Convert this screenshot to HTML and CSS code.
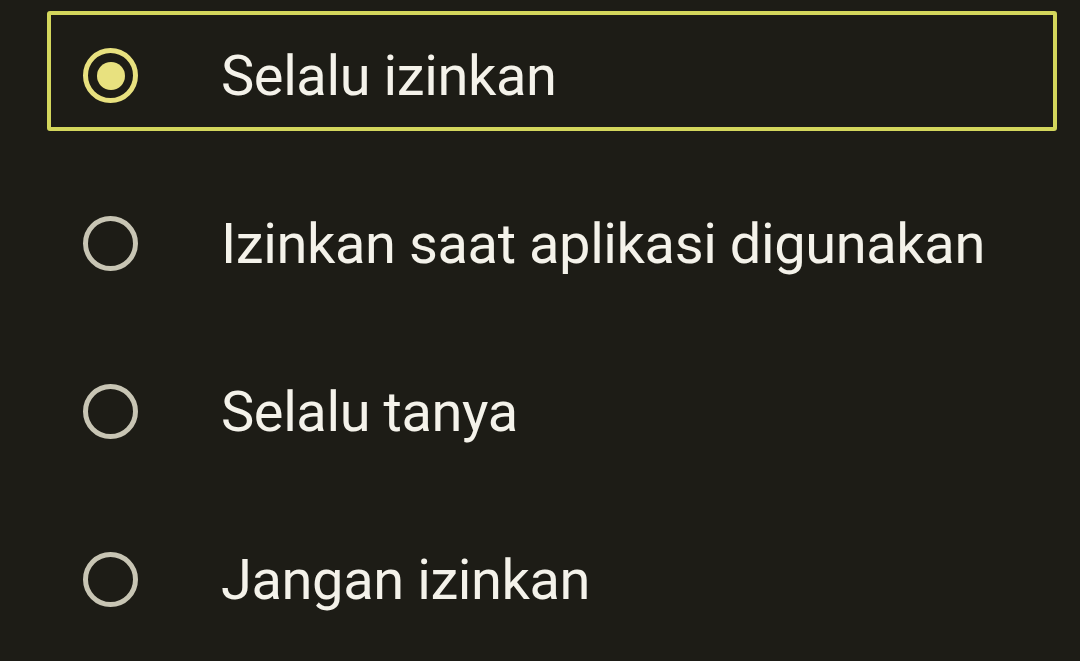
FILE: index.html
```html
<!DOCTYPE html>
<html>
<head>
<meta charset="utf-8">
<link rel="stylesheet" href="styles.css">
</head>
<body>
<div class="list">
  <div class="row selected">
    <span class="radio on"><span class="dot"></span></span>
    <span class="label">Selalu izinkan</span>
  </div>
  <div class="row">
    <span class="radio"></span>
    <span class="label">Izinkan saat aplikasi digunakan</span>
  </div>
  <div class="row">
    <span class="radio"></span>
    <span class="label">Selalu tanya</span>
  </div>
  <div class="row">
    <span class="radio"></span>
    <span class="label">Jangan izinkan</span>
  </div>
</div>
</body>
</html>
```
FILE: styles.css
```css
html, body {
  margin: 0;
  padding: 0;
  background: #1d1c16;
  width: 1080px;
  height: 661px;
  overflow: hidden;
}
.list {
  display: flex;
  flex-direction: column;
  gap: 48px;
  padding: 11px 0 0 47px;
}
.row {
  box-sizing: border-box;
  width: 1010px;
  height: 120px;
  display: flex;
  align-items: center;
  padding: 9px 0 0 32px;
  border: 4px solid transparent;
  border-radius: 3px;
}
.row.selected {
  border-color: #d3d65c;
}
.radio {
  box-sizing: border-box;
  width: 55px;
  height: 55px;
  border-radius: 50%;
  border: 5px solid #c8c5b4;
  display: flex;
  align-items: center;
  justify-content: center;
  flex: none;
}
.radio.on {
  border-color: #e8e17f;
  border-width: 5.5px;
}
.dot {
  width: 28px;
  height: 28px;
  border-radius: 50%;
  background: #e8e17f;
}
.label {
  margin-left: 83px;
  font-family: Roboto, "Noto Sans", sans-serif;
  font-size: 56px;
  line-height: 1;
  color: #f4f2ea;
  letter-spacing: -0.4px;
}
```
